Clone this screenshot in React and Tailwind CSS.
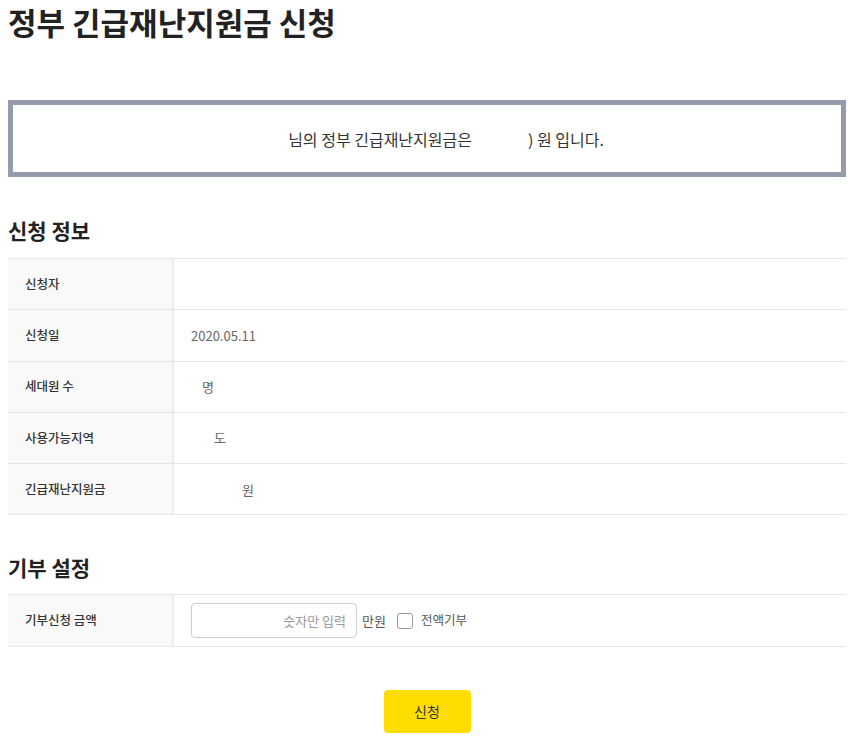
import React from "react";

const rows = [
  { label: "신청자", value: "", pad: "pl-[17px]" },
  { label: "신청일", value: "2020.05.11", pad: "pl-[17px]" },
  { label: "세대원 수", value: "명", pad: "pl-[28px]" },
  { label: "사용가능지역", value: "도", pad: "pl-[40px]" },
  { label: "긴급재난지원금", value: "원", pad: "pl-[68px]" },
];

function Row({ label, children, pad }) {
  return (
    <div className="grid grid-cols-[166px_1fr] border-b border-[#e6e6e6]">
      <div className="h-[50.3px] bg-[#f9f9f9] border-r-2 border-[#ececec] flex items-center pl-[17px] text-[12.5px] font-medium text-[#333]">
        {label}
      </div>
      <div className={`h-[50.3px] flex items-center text-[13px] text-[#666] ${pad}`}>
        {children}
      </div>
    </div>
  );
}

export default function App() {
  return (
    <div
      className="px-2 bg-white text-[#222]"
      style={{ fontFamily: '"Noto Sans CJK KR", "Noto Sans", sans-serif' }}
    >
      <h1 className="text-[31px] font-bold leading-[44px] text-[#222]">
        정부 긴급재난지원금 신청
      </h1>

      {/* 지원금 안내 박스 */}
      <div className="mt-[56px] h-[77px] border-[5px] border-[#959cab] flex items-center justify-center text-[16px] text-[#333]">
        <span className="w-[38px]"></span>
        <span>님의 정부 긴급재난지원금은</span>
        <span className="w-[56px]"></span>
        <span>) 원 입니다.</span>
      </div>

      <h2 className="mt-[38px] text-[21px] font-bold leading-[30px] text-[#222]">신청 정보</h2>
      <div className="mt-[13px] border-t border-[#e6e6e6]">
        {rows.map((r) => (
          <Row key={r.label} label={r.label} pad={r.pad}>
            {r.value}
          </Row>
        ))}
      </div>

      <h2 className="mt-[37px] text-[21px] font-bold leading-[30px] text-[#222]">기부 설정</h2>
      <div className="mt-[12px] border-t border-[#e6e6e6]">
        <Row label="기부신청 금액" pad="pl-[17px]">
          <input
            type="text"
            placeholder="숫자만 입력"
            className="w-[166px] h-[35px] border border-[#cfcfcf] rounded-[4px] px-[10px] text-right text-[13px] text-[#555] placeholder:text-[#999] outline-none"
          />
          <span className="ml-[5px] text-[#555]">만원</span>
          <label className="ml-[11px] flex items-center gap-[8px] text-[12.5px] text-[#555]">
            <span className="w-[16px] h-[16px] rounded-[3px] border border-[#999] bg-white"></span>
            전액기부
          </label>
        </Row>
      </div>

      <div className="mt-[43px] flex justify-center">
        <button className="w-[87px] h-[43px] rounded-[4px] bg-[#ffdd00] text-[14px] text-[#333]">
          신청
        </button>
      </div>
    </div>
  );
}
